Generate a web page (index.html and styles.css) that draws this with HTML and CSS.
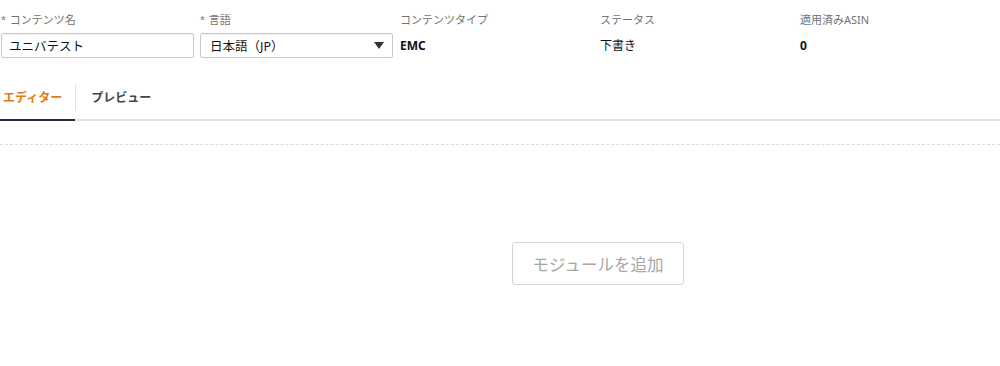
FILE: index.html
```html
<!doctype html>
<html lang="ja">
<head>
    <meta charset="UTF-8">
    <title>コンテンツ</title>
    <link rel="stylesheet" href="styles.css">
</head>
<body>

<div class="info-row">
    <div class="info-col">
        <label class="info-label"><i>*</i> コンテンツ名</label>
        <input class="info-input" type="text" value="ユニバテスト">
    </div>
    <div class="info-col">
        <label class="info-label"><i>*</i> 言語</label>
        <div class="info-select">
            <span>日本語（JP）</span>
            <em></em>
        </div>
    </div>
    <div class="info-col">
        <label class="info-label">コンテンツタイプ</label>
        <div class="info-value">EMC</div>
    </div>
    <div class="info-col">
        <label class="info-label">ステータス</label>
        <div class="info-value info-value-text">下書き</div>
    </div>
    <div class="info-col">
        <label class="info-label">適用済みASIN</label>
        <div class="info-value">0</div>
    </div>
</div>

<ul class="tabs">
    <li class="active"><a href="javascript:;">エディター</a></li>
    <li><a href="javascript:;">プレビュー</a></li>
</ul>

<div class="editor">
    <div class="editor-line"></div>
    <div class="editor-body">
        <button class="add-btn" type="button">モジュールを追加</button>
    </div>
</div>

</body>
</html>
```

FILE: styles.css
```css
*{
    margin: 0;
    padding: 0;
    box-sizing: border-box;
}
body{
    font-family: "Noto Sans", "Noto Sans CJK JP", sans-serif;
    color: #111;
    background: #fff;
    width: 1000px;
    height: 366px;
    overflow: hidden;
}

.info-row{
    display: flex;
    padding-top: 12px;
}
.info-col{
    width: 200px;
    padding-right: 7px;
}
.info-col:first-child{
    padding-left: 1px;
}
.info-label{
    display: block;
    font-size: 11px;
    line-height: 16px;
    height: 21px;
    color: #6f7373;
}
.info-label i{
    font-style: normal;
    font-size: 9px;
    vertical-align: 1px;
    margin-right: 1px;
}
.info-input,
.info-select{
    width: 193px;
    height: 25px;
    border: 1px solid #c4c8c9;
    border-radius: 2px;
    padding: 0 7px;
    font-family: inherit;
    font-size: 12.5px;
    color: #111;
    box-shadow: 0 1px 0 rgba(0,0,0,.04) inset;
    outline: none;
}
.info-select{
    display: flex;
    align-items: center;
    justify-content: space-between;
    padding: 0 8px 0 9px;
}
.info-select em{
    width: 0;
    height: 0;
    border-left: 5px solid transparent;
    border-right: 5px solid transparent;
    border-top: 7px solid #333;
}
.info-value{
    font-size: 12px;
    font-weight: bold;
    line-height: 25px;
}
.info-value-text{
    font-weight: normal;
}

.tabs{
    list-style: none;
    display: flex;
    margin-top: 26px;
    border-bottom: 2px solid #dde2e2;
}
.tabs li{
    position: relative;
    height: 37px;
    margin-bottom: -2px;
}
.tabs li a{
    display: block;
    font-size: 12px;
    font-weight: bold;
    line-height: 24px;
    padding: 2px 13px 0 3px;
    color: #444;
    text-decoration: none;
}
.tabs li + li a{
    border-left: 1px solid #dde2e2;
    padding-left: 15px;
}
.tabs li.active{
    border-bottom: 2px solid #232f3e;
}
.tabs li.active a{
    color: #e47911;
}

.editor-line{
    margin-top: 23px;
    border-top: 1px dashed #dadede;
}
.editor-body{
    display: flex;
    justify-content: center;
    padding-top: 97px;
    padding-left: 196px;
}
.add-btn{
    width: 172px;
    height: 43px;
    border: 1px solid #cfd5d5;
    border-radius: 3px;
    background: #fff;
    color: #a3a7a7;
    font-family: inherit;
    font-size: 16.5px;
}
```
